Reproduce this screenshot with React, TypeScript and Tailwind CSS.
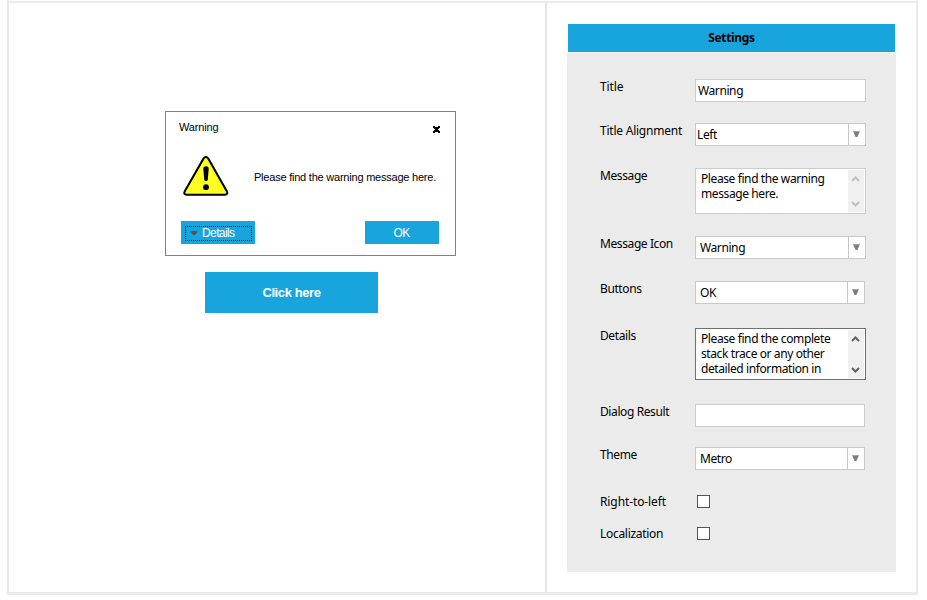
import type { ReactNode } from "react";

const ui = "font-['Noto_Sans','Open_Sans',sans-serif]";

function Row({
  label,
  className,
  tracking = "tracking-[-0.4px]",
  children,
}: {
  label: string;
  className: string;
  tracking?: string;
  children: ReactNode;
}) {
  return (
    <div className={`flex items-start ${className}`}>
      <div className={`w-[95px] shrink-0 whitespace-nowrap leading-4 ${tracking}`}>{label}</div>
      {children}
    </div>
  );
}

function TextBox({ value, width }: { value: string; width: string }) {
  return <div className={`h-[23px] border border-[#cccccc] bg-white pl-0.5 leading-[21px] ${width}`}>{value}</div>;
}

function Select({ value, className }: { value: string; className: string }) {
  return (
    <div className={`flex h-[23px] border border-[#c8c8c8] bg-white ${className}`}>
      <div className="flex-1 leading-[22px]">{value}</div>
      <div className="w-[17px] border-l border-[#c8c8c8]">
        <svg className="block" width="16" height="21" viewBox="0 0 16 21">
          <path d="M4.2 7.5h6.6L8.4 13H6.6z" fill="#7c7c7c" />
          <path d="M4 7h7v1H4z" fill="#a8a8a8" />
        </svg>
      </div>
    </div>
  );
}

function TextArea({ lines, box, bar, arrow }: { lines: string[]; box: string; bar: string; arrow: string }) {
  return (
    <div className={`flex w-[171px] border bg-white ${box}`}>
      <div className="flex-1 whitespace-nowrap pl-[5px] pt-0.5">
        {lines.map((line) => (
          <div key={line} className="h-[15px] leading-[15px]">{line}</div>
        ))}
      </div>
      <div className={`mr-px mt-px flex w-4 flex-col justify-between bg-[#f0f0f0] ${bar}`}>
        <svg width="16" height="16" viewBox="0 0 16 16" fill="none" stroke={arrow} strokeWidth="2">
          <path d="M4 11l3.5-3.5 3.5 3.5" />
        </svg>
        <svg width="16" height="16" viewBox="0 0 16 16" fill="none" stroke={arrow} strokeWidth="2">
          <path d="M4 6l3.5 3.5L11 6" />
        </svg>
      </div>
    </div>
  );
}

function CheckBox() {
  return <div className="ml-0.5 mt-px size-[13px] border border-[#555555] bg-white" />;
}

function Dialog() {
  return (
    <div className="ml-[156px] mt-[108px] h-[145px] w-[291px] border border-[#18a5de] text-[11px] text-black">
      <div className="flex h-[35px] justify-between pl-[13px] pr-[15px]">
        <span className="pt-[7px] leading-4 tracking-[-0.15px]">Warning</span>
        <svg className="mt-[13px]" width="7" height="8" viewBox="0 0 7 8" shapeRendering="crispEdges">
          <path d="M0 1h2v1h3V1h2v2H6v1H5v1h1v1h1v2H5V7H2v1H0V6h1V5h1V4H1V3H0z" />
        </svg>
      </div>
      <div className="flex h-[74px] pl-[17px]">
        <svg className="mt-2" width="47" height="43" viewBox="0 0 47 43">
          <path d="M20.6 3.4Q22.9 .4 25.2 3.4L43.8 36.2Q45.4 39.7 41.8 39.7H3.8Q.2 39.7 1.8 36.2z" fill="#ffff22" stroke="#000" strokeWidth="2" />
          <path d="M20.3 14q0-2.7 2.7-2.7t2.7 2.7l-1 11.2q-1.7 1.5-3.4 0z" />
          <circle cx="23" cy="32.2" r="2.9" />
        </svg>
        <span className="ml-[24px] mt-[22px] whitespace-nowrap leading-4 tracking-[-0.22px]">Please find the warning message here.</span>
      </div>
      <div className="flex justify-between pl-[15px] pr-4 text-[12px] text-white">
        <button className="h-[23px] w-[74px] bg-[#18a5de] p-1 pr-[3px] pb-[3px]">
          <span className="flex h-[15px] items-center border border-dotted border-black pl-1">
            <svg width="9" height="5" viewBox="0 0 9 5"><path d="M0 0h8L5 4H3z" fill="#555" /></svg>
            <span className="ml-[3px] leading-[14px] tracking-[-0.6px]">Details</span>
          </span>
        </button>
        <button className="h-[23px] w-[74px] bg-[#18a5de] pr-px pt-px leading-[22px] tracking-[-0.6px]">OK</button>
      </div>
    </div>
  );
}

export default function App() {
  return (
    <div className="h-[600px] w-[927px] overflow-hidden bg-white pl-[7px]">
      <div className="h-[595px] w-[911px] border-x-2 border-[#ebebeb] pt-px">
        <div className="flex h-[594px] border-b-[3px] border-t-2 border-[#ebebeb]">
          <main className="w-[536px] font-['Liberation_Sans',sans-serif]">
            <Dialog />
            <button className="ml-[196px] mt-4 block h-[41px] w-[173px] bg-[#18a5de] text-[13px] font-bold leading-[41px] tracking-[-0.4px] text-white">
              Click here
            </button>
          </main>
          <aside className={`flex-1 border-l-2 border-[#e5e5e5] pl-5 pt-[21px] text-[12px] text-black ${ui}`}>
            <h1 className="ml-px h-7 w-[327px] bg-[#18a5de] text-center font-bold leading-7 tracking-[-0.35px]">Settings</h1>
            <div className="mt-px h-[519px] w-[329px] bg-[#ebebeb] pl-[33px] pt-[26px] tracking-[-0.4px]">
              <Row label="Title" className="h-[44px]" tracking="tracking-[-0.1px]"><TextBox value="Warning" width="w-[171px]" /></Row>
              <Row label="Title Alignment" className="h-[45px]" tracking="tracking-[-0.23px]"><Select value="Left" className="w-[171px] pl-px" /></Row>
              <Row label="Message" className="h-[68px]">
                <TextArea lines={["Please find the warning", "message here."]} box="h-[46px] border-[#cccccc]" bar="h-[42px]" arrow="#bfbfbf" />
              </Row>
              <Row label="Message Icon" className="h-[45px]"><Select value="Warning" className="w-[171px] pl-1" /></Row>
              <Row label="Buttons" className="h-[47px]"><Select value="OK" className="w-[170px] pl-1" /></Row>
              <Row label="Details" className="h-[76px]">
                <TextArea lines={["Please find the complete", "stack trace or any other", "detailed information in"]} box="h-[52px] border-[#707070]" bar="h-[48px]" arrow="#606060" />
              </Row>
              <Row label="Dialog Result" className="h-[43px]"><TextBox value="" width="w-[170px]" /></Row>
              <Row label="Theme" className="h-[47px]"><Select value="Metro" className="w-[170px] pl-1" /></Row>
              <Row label="Right-to-left" className="h-[32px]" tracking="tracking-[-0.1px]"><CheckBox /></Row>
              <Row label="Localization" className="h-[32px]" tracking="tracking-[-0.3px]"><CheckBox /></Row>
            </div>
          </aside>
        </div>
      </div>
    </div>
  );
}
